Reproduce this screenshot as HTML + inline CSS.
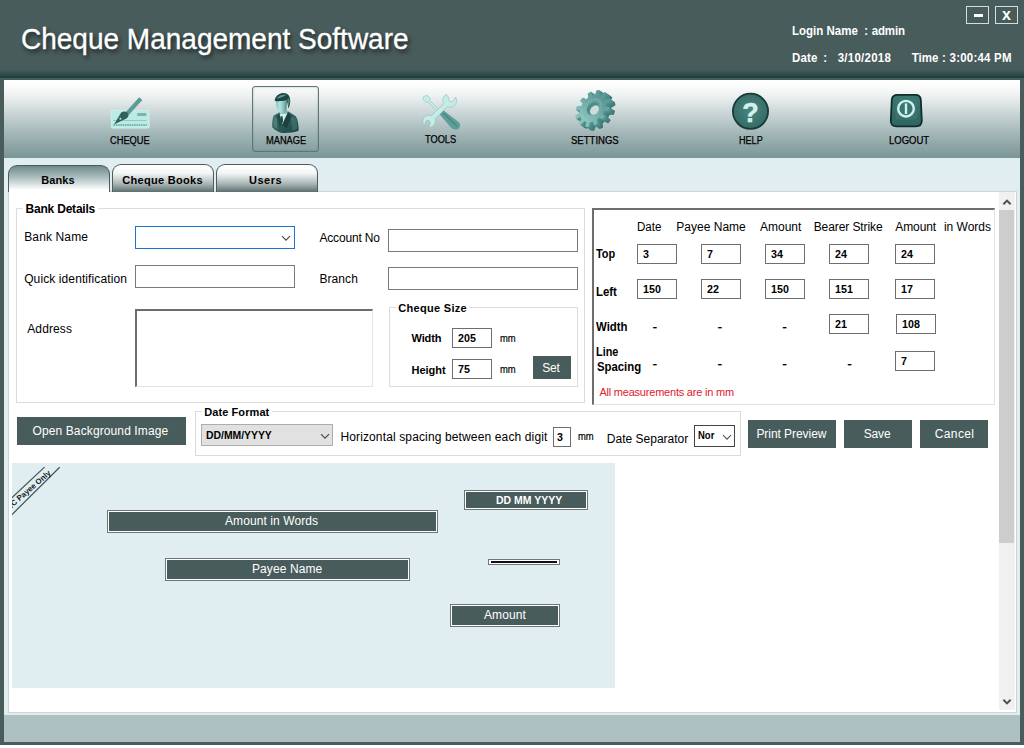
<!DOCTYPE html>
<html lang="en">
<head>
<meta charset="utf-8">
<title>Cheque Management Software</title>
<style>
*{box-sizing:border-box;margin:0;padding:0}
html,body{width:1024px;height:748px;overflow:hidden;background:#fff}
body{font-family:"Liberation Sans",sans-serif;font-size:12px;color:#000}
#app{position:relative;width:1024px;height:748px;overflow:hidden;background:#fff}
.abs,#app div,#app span,#app svg{position:absolute}
.t{white-space:nowrap;line-height:1}
.b{font-weight:bold}
/* frame */
#frame{left:0;top:0;width:1024px;height:745px;background:#485c5b}
#hdrgrad{left:0;top:70px;width:1024px;height:8px;background:linear-gradient(#485c5b,#163f3c)}
#inner{left:4px;top:80px;width:1016px;height:662px;background:#e0eef2}
#toolbar{left:4px;top:80px;width:1016px;height:78px;background:linear-gradient(#ffffff 0%,#fdfdfd 6%,#eef1f1 20%,#c3d0d1 47%,#9db2b3 73%,#7a9596 100%)}
#status{left:4px;top:715px;width:1016px;height:27px;background:#adc1c3}
#panel{left:8px;top:191px;width:1009px;height:522px;background:#fff;border:1px solid #d0d4d4}
/* header */
#title{left:21px;top:25px;font-size:28px;color:#fff;transform:scaleY(1.05);transform-origin:0 4px;-webkit-text-stroke:.3px #fff;text-shadow:2px 3px 4px rgba(0,0,0,.65)}
.hl{color:#fff;font-weight:bold;transform:scaleY(1.05);transform-origin:0 85%}
.wb{border:1px solid #d5dedd;color:#fff;font-weight:bold;text-align:center}
/* toolbar labels */
.tl{color:#000;-webkit-text-stroke:.25px #000}
/* tabs */
.tab{border:1px solid #4d5c5c;border-bottom:none;border-radius:9px 9px 0 0;font-weight:bold;font-size:11px;text-align:center}
/* form */
.in{background:#fff;border:1px solid #7a7a7a}
.sin{background:#fff;border:1px solid #6e6e6e;font-weight:bold;font-size:10.7px;padding:4px 0 0 5px;line-height:1}
.fs{border:1px solid #dcdcdc}
.lg{background:#fff;font-weight:bold;padding:0 2px}
.btn{background:#485c5b;color:#fff;text-align:center;font-size:12px}
.cbx{border:1px solid #6c7777;background:#fff}
.cbx i{position:absolute;left:1px;top:1px;right:1px;bottom:1px;background:#485c5b;display:block}
.cbx span{left:0;right:0;text-align:center;color:#fff;white-space:nowrap;line-height:1}
.dash{width:5px;height:1.4px;background:#222}
</style>
</head>
<body>
<div id="app">
<div id="frame"></div>
<div id="hdrgrad"></div>
<div id="inner"></div>
<div id="toolbar"></div>
<div id="status"></div>
<div id="panel"></div>

<!-- HEADER -->
<div id="title" class="t">Cheque Management Software</div>
<!--HDR-->
<div class="t hl" style="left:792.00px;top:25.87px;font-size:11.5px;font-weight:bold;letter-spacing:0.009px;">Login Name</div>
<div class="t hl" style="left:864.30px;top:25.87px;font-size:11.5px;font-weight:bold;">:</div>
<div class="t hl" style="left:871.70px;top:25.87px;font-size:11.5px;font-weight:bold;letter-spacing:-0.135px;">admin</div>
<div class="t hl" style="left:792.00px;top:53.27px;font-size:11.5px;font-weight:bold;letter-spacing:0.157px;">Date</div>
<div class="t hl" style="left:823.20px;top:53.27px;font-size:11.5px;font-weight:bold;">:</div>
<div class="t hl" style="left:837.70px;top:53.27px;font-size:11.5px;font-weight:bold;letter-spacing:0.254px;">3/10/2018</div>
<div class="t hl" style="left:911.80px;top:53.27px;font-size:11.5px;font-weight:bold;letter-spacing:-0.012px;">Time</div>
<div class="t hl" style="left:942.00px;top:53.27px;font-size:11.5px;font-weight:bold;">:</div>
<div class="t hl" style="left:949.60px;top:53.27px;font-size:11.5px;font-weight:bold;letter-spacing:0.200px;">3:00:44 PM</div>
<div class="wb" style="left:966px;top:6px;width:23px;height:18px"><div style="left:7px;top:7px;width:9px;height:3px;background:#fff"></div></div>
<div class="wb" style="left:995px;top:6px;width:23px;height:18px"><span class="t" style="left:0;right:0;top:0.3px;font-size:16px">x</span></div>
<!--/HDR-->

<!--TOOLBAR-->
<div style="left:252px;top:86px;width:67px;height:66px;border:1px solid #5f7677;border-radius:3px;box-shadow:inset 0 0 2px rgba(70,95,95,.45)"></div>
<svg style="left:0;top:80px" width="1024" height="78" viewBox="0 80 1024 78">
<defs>
<linearGradient id="gHead" x1="0" y1="0" x2="1" y2="0"><stop offset="0" stop-color="#86c2bb"/><stop offset=".35" stop-color="#b4e4de"/><stop offset=".7" stop-color="#86c2bb"/><stop offset="1" stop-color="#4b827d"/></linearGradient>
<linearGradient id="gSuit" x1="0" y1="0" x2="1" y2="1"><stop offset="0" stop-color="#41766f"/><stop offset=".5" stop-color="#2c5b57"/><stop offset="1" stop-color="#1d4441"/></linearGradient>
<radialGradient id="gHelp" cx=".5" cy=".45" r=".6"><stop offset="0" stop-color="#4b8682"/><stop offset="1" stop-color="#336762"/></radialGradient>
<linearGradient id="gGear" x1="0" y1="0" x2="1" y2="0"><stop offset="0" stop-color="#8fc6c1"/><stop offset=".55" stop-color="#6fa9a5"/><stop offset="1" stop-color="#5a9692"/></linearGradient>
<linearGradient id="gOut" x1="0" y1="0" x2="0" y2="1"><stop offset="0" stop-color="#3c7571"/><stop offset="1" stop-color="#2f6561"/></linearGradient>
</defs>
<g>
<rect x="111.3" y="110.3" width="37.8" height="17.8" rx="1.2" fill="#bdeae3" stroke="#d2f3ee" stroke-width=".8"/>
<rect x="137.3" y="113" width="9" height="3" fill="#7db4ae"/>
<path d="M113 120.5 H146.5" stroke="#8ecdc6" stroke-width="1"/>
<path d="M113.5 125 H147" stroke="#7ab5af" stroke-width="2.2" stroke-dasharray="1.6 .7"/>
<path d="M140.8 98.6 L124.4 116.6" stroke="#5b9b96" stroke-width="4.2"/>
<path d="M121.2 112.6 C123.5 110.6 127 111.4 128 113.4 C129 115.4 128 117.4 126.4 118.4 L114 124.4 Z" fill="#2f625f"/>
<circle cx="120.4" cy="118.8" r="1" fill="#bfe8e2"/>
</g>
<g>
<path d="M273.8 115.5 C272.5 118 272 123 272.2 127.2 C275 130 278 132 281.5 132.9 C287 133.4 294 132.6 298.6 130.8 C298.8 126 298 120 296 116.4 L288.5 111.6 L280 112 Z" fill="url(#gSuit)"/>
<path d="M274.5 117 C273.4 120 273.2 123.5 273.4 126.4 L277.5 129.5 L276.8 118.5 Z" fill="#5a948f" opacity=".55"/>
<path d="M290.5 116.5 L295.4 117.4 C296.8 120.5 297.4 124.5 297.4 128.6 L292.5 130.8 Z" fill="#4a837f" opacity=".5"/>
<path d="M279.6 113.2 L287.8 112.4 L282.2 124.2 Z" fill="#d2efeb"/>
<path d="M279.2 113 L281.6 124.8 L279.6 126.8 L276.8 116.6 Z" fill="#1f4744" opacity=".85"/>
<path d="M288 112.4 L282.6 124.8 L286.4 128.8 L291.6 116 Z" fill="#1a3e3b" opacity=".85"/>
<path d="M280.6 116.4 L282.6 116.2 L283 121.6 L282 123.8 L280.6 121.6 Z" fill="#214b48"/>
<path d="M280.6 108.5 L280.4 114 L287 113.4 L286.6 108 Z" fill="#79b5ae"/>
<path d="M276 100.6 C275.8 104.5 276.6 108.5 278.4 111 C279.6 112.8 281 113.9 282.1 113.8 C283.7 113.6 285.3 111.6 286.1 109.4 C286.9 107 287.1 103 286.7 99.8 Z" fill="url(#gHead)"/>
<path d="M274.8 100.9 C274.6 97.5 278 93.6 283 93.1 C287.5 92.8 290 96 290.2 100 C290.4 104 289.4 106.8 288.2 108.2 C288 105.5 287.6 102.4 286.4 100 C283 101.2 278 101.5 274.8 100.9 Z" fill="#1d4542"/>
<path d="M276.6 98.6 C278.6 95.6 282.6 94.1 286.2 95 C283.6 96.6 279.6 98.5 276.6 98.6 Z" fill="#5f9a95"/>
<path d="M287.2 99.6 C288.2 97.6 289.5 97.4 289.7 100.6 C289.7 103.4 289 105.6 288.4 106.8 C288.2 104.4 287.9 101.8 287.2 99.6 Z" fill="#5a938e" opacity=".85"/>
</g>
<g>
<path d="M423.5 96.8 L427 95.2 L430.3 98.5 L429.5 100.3 L441.5 112.5 L440 114 L427.8 101.8 L426 102.4 L423 99.2 Z" fill="#c6ece7" stroke="#8cc6c0" stroke-width=".7"/>
<path d="M440.4 110.6 L443.6 110.6 L458.6 122 C461.2 124.6 460.2 128.4 457 129.4 C454.8 130 452.6 129.2 451.2 127.8 L439.6 114.6 C439 113 439.4 111.4 440.4 110.6 Z" fill="#5f9d98"/>
<path d="M443.4 113.2 L457.2 126.2" stroke="#4a8783" stroke-width="1.4"/>
<path d="M446.3 94.3 C443.2 96.2 442 100.2 443.6 103.6 L431.5 115.7 C428.2 114.4 424.6 115.6 423.3 119 C422.4 121.4 422.8 123.8 424.3 125.6 L425.6 122 C426 120.6 427.4 120 428.8 120.6 C430.2 121.2 430.6 122.8 430 124.2 L428.8 127.6 C431.8 127.4 434.4 125.2 435.2 122.4 C435.6 121 435.5 119.8 435.2 118.8 L447.4 106.6 C450.6 107.8 454.2 106.8 455.8 103.6 C456.8 101.6 456.8 99.2 455.6 97 L453.6 100.6 C452.8 102 451.4 102.4 450 101.6 C448.6 100.8 448.2 99.4 448.9 98 Z" fill="#c6ece7" stroke="#8cc6c0" stroke-width=".7"/>
</g>
<g transform="translate(598.20,112.40) rotate(-50) scale(1,.72)"><path d="M14.80 -2.42 L20.39 -2.14 L20.39 2.14 L14.80 2.42 L14.03 5.30 L18.73 8.34 L16.58 12.05 L11.61 9.50 L9.50 11.61 L12.05 16.58 L8.34 18.73 L5.30 14.03 L2.42 14.80 L2.14 20.39 L-2.14 20.39 L-2.42 14.80 L-5.30 14.03 L-8.34 18.73 L-12.05 16.58 L-9.50 11.61 L-11.61 9.50 L-16.58 12.05 L-18.73 8.34 L-14.03 5.30 L-14.80 2.42 L-20.39 2.14 L-20.39 -2.14 L-14.80 -2.42 L-14.03 -5.30 L-18.73 -8.34 L-16.58 -12.05 L-11.61 -9.50 L-9.50 -11.61 L-12.05 -16.58 L-8.34 -18.73 L-5.30 -14.03 L-2.42 -14.80 L-2.14 -20.39 L2.14 -20.39 L2.42 -14.80 L5.30 -14.03 L8.34 -18.73 L12.05 -16.58 L9.50 -11.61 L11.61 -9.50 L16.58 -12.05 L18.73 -8.34 L14.03 -5.30 Z" fill="#3c7773"/><circle r="15.3" fill="#3c7773"/></g>
<g transform="translate(597.58,111.97) rotate(-50) scale(1,.72)"><path d="M14.80 -2.42 L20.39 -2.14 L20.39 2.14 L14.80 2.42 L14.03 5.30 L18.73 8.34 L16.58 12.05 L11.61 9.50 L9.50 11.61 L12.05 16.58 L8.34 18.73 L5.30 14.03 L2.42 14.80 L2.14 20.39 L-2.14 20.39 L-2.42 14.80 L-5.30 14.03 L-8.34 18.73 L-12.05 16.58 L-9.50 11.61 L-11.61 9.50 L-16.58 12.05 L-18.73 8.34 L-14.03 5.30 L-14.80 2.42 L-20.39 2.14 L-20.39 -2.14 L-14.80 -2.42 L-14.03 -5.30 L-18.73 -8.34 L-16.58 -12.05 L-11.61 -9.50 L-9.50 -11.61 L-12.05 -16.58 L-8.34 -18.73 L-5.30 -14.03 L-2.42 -14.80 L-2.14 -20.39 L2.14 -20.39 L2.42 -14.80 L5.30 -14.03 L8.34 -18.73 L12.05 -16.58 L9.50 -11.61 L11.61 -9.50 L16.58 -12.05 L18.73 -8.34 L14.03 -5.30 Z" fill="#3f7b77"/><circle r="15.3" fill="#3f7b77"/></g>
<g transform="translate(596.96,111.53) rotate(-50) scale(1,.72)"><path d="M14.80 -2.42 L20.39 -2.14 L20.39 2.14 L14.80 2.42 L14.03 5.30 L18.73 8.34 L16.58 12.05 L11.61 9.50 L9.50 11.61 L12.05 16.58 L8.34 18.73 L5.30 14.03 L2.42 14.80 L2.14 20.39 L-2.14 20.39 L-2.42 14.80 L-5.30 14.03 L-8.34 18.73 L-12.05 16.58 L-9.50 11.61 L-11.61 9.50 L-16.58 12.05 L-18.73 8.34 L-14.03 5.30 L-14.80 2.42 L-20.39 2.14 L-20.39 -2.14 L-14.80 -2.42 L-14.03 -5.30 L-18.73 -8.34 L-16.58 -12.05 L-11.61 -9.50 L-9.50 -11.61 L-12.05 -16.58 L-8.34 -18.73 L-5.30 -14.03 L-2.42 -14.80 L-2.14 -20.39 L2.14 -20.39 L2.42 -14.80 L5.30 -14.03 L8.34 -18.73 L12.05 -16.58 L9.50 -11.61 L11.61 -9.50 L16.58 -12.05 L18.73 -8.34 L14.03 -5.30 Z" fill="#427f7b"/><circle r="15.3" fill="#427f7b"/></g>
<g transform="translate(596.33,111.10) rotate(-50) scale(1,.72)"><path d="M14.80 -2.42 L20.39 -2.14 L20.39 2.14 L14.80 2.42 L14.03 5.30 L18.73 8.34 L16.58 12.05 L11.61 9.50 L9.50 11.61 L12.05 16.58 L8.34 18.73 L5.30 14.03 L2.42 14.80 L2.14 20.39 L-2.14 20.39 L-2.42 14.80 L-5.30 14.03 L-8.34 18.73 L-12.05 16.58 L-9.50 11.61 L-11.61 9.50 L-16.58 12.05 L-18.73 8.34 L-14.03 5.30 L-14.80 2.42 L-20.39 2.14 L-20.39 -2.14 L-14.80 -2.42 L-14.03 -5.30 L-18.73 -8.34 L-16.58 -12.05 L-11.61 -9.50 L-9.50 -11.61 L-12.05 -16.58 L-8.34 -18.73 L-5.30 -14.03 L-2.42 -14.80 L-2.14 -20.39 L2.14 -20.39 L2.42 -14.80 L5.30 -14.03 L8.34 -18.73 L12.05 -16.58 L9.50 -11.61 L11.61 -9.50 L16.58 -12.05 L18.73 -8.34 L14.03 -5.30 Z" fill="#45837f"/><circle r="15.3" fill="#45837f"/></g>
<g transform="translate(595.71,110.67) rotate(-50) scale(1,.72)"><path d="M14.80 -2.42 L20.39 -2.14 L20.39 2.14 L14.80 2.42 L14.03 5.30 L18.73 8.34 L16.58 12.05 L11.61 9.50 L9.50 11.61 L12.05 16.58 L8.34 18.73 L5.30 14.03 L2.42 14.80 L2.14 20.39 L-2.14 20.39 L-2.42 14.80 L-5.30 14.03 L-8.34 18.73 L-12.05 16.58 L-9.50 11.61 L-11.61 9.50 L-16.58 12.05 L-18.73 8.34 L-14.03 5.30 L-14.80 2.42 L-20.39 2.14 L-20.39 -2.14 L-14.80 -2.42 L-14.03 -5.30 L-18.73 -8.34 L-16.58 -12.05 L-11.61 -9.50 L-9.50 -11.61 L-12.05 -16.58 L-8.34 -18.73 L-5.30 -14.03 L-2.42 -14.80 L-2.14 -20.39 L2.14 -20.39 L2.42 -14.80 L5.30 -14.03 L8.34 -18.73 L12.05 -16.58 L9.50 -11.61 L11.61 -9.50 L16.58 -12.05 L18.73 -8.34 L14.03 -5.30 Z" fill="#488783"/><circle r="15.3" fill="#488783"/></g>
<g transform="translate(595.09,110.23) rotate(-50) scale(1,.72)"><path d="M14.80 -2.42 L20.39 -2.14 L20.39 2.14 L14.80 2.42 L14.03 5.30 L18.73 8.34 L16.58 12.05 L11.61 9.50 L9.50 11.61 L12.05 16.58 L8.34 18.73 L5.30 14.03 L2.42 14.80 L2.14 20.39 L-2.14 20.39 L-2.42 14.80 L-5.30 14.03 L-8.34 18.73 L-12.05 16.58 L-9.50 11.61 L-11.61 9.50 L-16.58 12.05 L-18.73 8.34 L-14.03 5.30 L-14.80 2.42 L-20.39 2.14 L-20.39 -2.14 L-14.80 -2.42 L-14.03 -5.30 L-18.73 -8.34 L-16.58 -12.05 L-11.61 -9.50 L-9.50 -11.61 L-12.05 -16.58 L-8.34 -18.73 L-5.30 -14.03 L-2.42 -14.80 L-2.14 -20.39 L2.14 -20.39 L2.42 -14.80 L5.30 -14.03 L8.34 -18.73 L12.05 -16.58 L9.50 -11.61 L11.61 -9.50 L16.58 -12.05 L18.73 -8.34 L14.03 -5.30 Z" fill="#4b8b87"/><circle r="15.3" fill="#4b8b87"/></g>
<g transform="translate(594.47,109.80) rotate(-50) scale(1,.72)"><path d="M14.80 -2.42 L20.39 -2.14 L20.39 2.14 L14.80 2.42 L14.03 5.30 L18.73 8.34 L16.58 12.05 L11.61 9.50 L9.50 11.61 L12.05 16.58 L8.34 18.73 L5.30 14.03 L2.42 14.80 L2.14 20.39 L-2.14 20.39 L-2.42 14.80 L-5.30 14.03 L-8.34 18.73 L-12.05 16.58 L-9.50 11.61 L-11.61 9.50 L-16.58 12.05 L-18.73 8.34 L-14.03 5.30 L-14.80 2.42 L-20.39 2.14 L-20.39 -2.14 L-14.80 -2.42 L-14.03 -5.30 L-18.73 -8.34 L-16.58 -12.05 L-11.61 -9.50 L-9.50 -11.61 L-12.05 -16.58 L-8.34 -18.73 L-5.30 -14.03 L-2.42 -14.80 L-2.14 -20.39 L2.14 -20.39 L2.42 -14.80 L5.30 -14.03 L8.34 -18.73 L12.05 -16.58 L9.50 -11.61 L11.61 -9.50 L16.58 -12.05 L18.73 -8.34 L14.03 -5.30 Z" fill="#4e8f8b"/><circle r="15.3" fill="#4e8f8b"/></g>
<g transform="translate(593.84,109.37) rotate(-50) scale(1,.72)"><path d="M14.80 -2.42 L20.39 -2.14 L20.39 2.14 L14.80 2.42 L14.03 5.30 L18.73 8.34 L16.58 12.05 L11.61 9.50 L9.50 11.61 L12.05 16.58 L8.34 18.73 L5.30 14.03 L2.42 14.80 L2.14 20.39 L-2.14 20.39 L-2.42 14.80 L-5.30 14.03 L-8.34 18.73 L-12.05 16.58 L-9.50 11.61 L-11.61 9.50 L-16.58 12.05 L-18.73 8.34 L-14.03 5.30 L-14.80 2.42 L-20.39 2.14 L-20.39 -2.14 L-14.80 -2.42 L-14.03 -5.30 L-18.73 -8.34 L-16.58 -12.05 L-11.61 -9.50 L-9.50 -11.61 L-12.05 -16.58 L-8.34 -18.73 L-5.30 -14.03 L-2.42 -14.80 L-2.14 -20.39 L2.14 -20.39 L2.42 -14.80 L5.30 -14.03 L8.34 -18.73 L12.05 -16.58 L9.50 -11.61 L11.61 -9.50 L16.58 -12.05 L18.73 -8.34 L14.03 -5.30 Z" fill="#51928e"/><circle r="15.3" fill="#51928e"/></g>
<g transform="translate(593.22,108.93) rotate(-50) scale(1,.72)"><path d="M14.80 -2.42 L20.39 -2.14 L20.39 2.14 L14.80 2.42 L14.03 5.30 L18.73 8.34 L16.58 12.05 L11.61 9.50 L9.50 11.61 L12.05 16.58 L8.34 18.73 L5.30 14.03 L2.42 14.80 L2.14 20.39 L-2.14 20.39 L-2.42 14.80 L-5.30 14.03 L-8.34 18.73 L-12.05 16.58 L-9.50 11.61 L-11.61 9.50 L-16.58 12.05 L-18.73 8.34 L-14.03 5.30 L-14.80 2.42 L-20.39 2.14 L-20.39 -2.14 L-14.80 -2.42 L-14.03 -5.30 L-18.73 -8.34 L-16.58 -12.05 L-11.61 -9.50 L-9.50 -11.61 L-12.05 -16.58 L-8.34 -18.73 L-5.30 -14.03 L-2.42 -14.80 L-2.14 -20.39 L2.14 -20.39 L2.42 -14.80 L5.30 -14.03 L8.34 -18.73 L12.05 -16.58 L9.50 -11.61 L11.61 -9.50 L16.58 -12.05 L18.73 -8.34 L14.03 -5.30 Z" fill="#549591"/><circle r="15.3" fill="#549591"/></g>
<g transform="translate(592.6,108.5) rotate(-50) scale(1,.72)">
<path d="M14.80 -2.42 L20.39 -2.14 L20.39 2.14 L14.80 2.42 L14.03 5.30 L18.73 8.34 L16.58 12.05 L11.61 9.50 L9.50 11.61 L12.05 16.58 L8.34 18.73 L5.30 14.03 L2.42 14.80 L2.14 20.39 L-2.14 20.39 L-2.42 14.80 L-5.30 14.03 L-8.34 18.73 L-12.05 16.58 L-9.50 11.61 L-11.61 9.50 L-16.58 12.05 L-18.73 8.34 L-14.03 5.30 L-14.80 2.42 L-20.39 2.14 L-20.39 -2.14 L-14.80 -2.42 L-14.03 -5.30 L-18.73 -8.34 L-16.58 -12.05 L-11.61 -9.50 L-9.50 -11.61 L-12.05 -16.58 L-8.34 -18.73 L-5.30 -14.03 L-2.42 -14.80 L-2.14 -20.39 L2.14 -20.39 L2.42 -14.80 L5.30 -14.03 L8.34 -18.73 L12.05 -16.58 L9.50 -11.61 L11.61 -9.50 L16.58 -12.05 L18.73 -8.34 L14.03 -5.30 Z" fill="url(#gGear)"/><circle r="15.3" fill="url(#gGear)"/>
<circle r="10.4" fill="none" stroke="#7fbab5" stroke-width="1.6" opacity=".55"/>
<circle r="6.9" fill="#4d8c88"/>
</g>
<g transform="translate(594.5,110.0) rotate(-50) scale(1,.72)"><circle r="5.3" fill="#cfdcdc"/></g>
<g>
<circle cx="750.5" cy="111.3" r="17.6" fill="url(#gHelp)" stroke="#173b38" stroke-width="1.8"/>
<text x="750.6" y="121.6" text-anchor="middle" font-family="Liberation Sans, sans-serif" font-weight="bold" font-size="27" fill="#d5f1ed" stroke="#d5f1ed" stroke-width=".5" stroke-linejoin="round">?</text>
</g>
<g>
<path d="M897.5 94.8 H915.5 Q920.3 94.8 920.8 99.5 L921.8 120.5 Q921.8 126.3 916 126.3 H896.5 Q890.6 126.3 890.8 120.5 L891.8 99.5 Q892.3 94.8 897.5 94.8 Z" fill="url(#gOut)" stroke="#0f2f2c" stroke-width="1.8"/>
<rect x="895.5" y="98.5" width="21.5" height="21" rx="3" fill="#3f7a76" opacity=".55"/>
<circle cx="906" cy="108.7" r="7.8" fill="none" stroke="#cdf3ee" stroke-width="2.4"/>
<path d="M906 103.4 V114" stroke="#cdf3ee" stroke-width="2.4"/>
</g>
</svg>
<div class="t tl" style="left:110.00px;top:135.53px;font-size:10.0px;transform:scale(0.928,1.000);transform-origin:0 84.65%;">CHEQUE</div>
<div class="t tl" style="left:265.90px;top:135.53px;font-size:10.0px;transform:scale(0.927,1.000);transform-origin:0 84.65%;">MANAGE</div>
<div class="t tl" style="left:424.60px;top:134.53px;font-size:10.0px;transform:scale(0.922,1.000);transform-origin:0 84.65%;">TOOLS</div>
<div class="t tl" style="left:571.00px;top:135.53px;font-size:10.0px;transform:scale(0.954,1.000);transform-origin:0 84.65%;">SETTINGS</div>
<div class="t tl" style="left:738.60px;top:135.53px;font-size:10.0px;transform:scale(0.907,1.000);transform-origin:0 84.65%;">HELP</div>
<div class="t tl" style="left:888.50px;top:135.53px;font-size:10.0px;transform:scale(0.950,1.000);transform-origin:0 84.65%;">LOGOUT</div>
<!--/TOOLBAR-->

<!--TABS-->
<div class="tab" style="left:8px;top:165px;width:102px;height:27px;background:linear-gradient(#6f8a8b 0%,#a9bcbd 42%,#ffffff 92%)"><div class="t " style="left:32.20px;top:8.69px;font-size:11px;font-weight:bold;letter-spacing:0.075px;">Banks</div>
</div>
<div class="tab" style="left:112px;top:164px;width:102px;height:28px;background:linear-gradient(#ffffff 0%,#f4f6f6 30%,#a9b4b4 70%,#5c6e6e 100%)"><div class="t " style="left:9.20px;top:9.69px;font-size:11px;font-weight:bold;letter-spacing:0.310px;">Cheque Books</div>
</div>
<div class="tab" style="left:216px;top:164px;width:102px;height:28px;background:linear-gradient(#ffffff 0%,#f4f6f6 30%,#a9b4b4 70%,#5c6e6e 100%)"><div class="t " style="left:32.00px;top:9.69px;font-size:11px;font-weight:bold;letter-spacing:0.510px;">Users</div>
</div>
<!--/TABS-->

<!--FORM-->
<div class="fs" style="left:16px;top:208px;width:569px;height:195px"></div>
<div style="left:23px;top:206px;width:75px;height:5px;background:#fff"></div>
<div class="t " style="left:25.60px;top:202.84px;font-size:12px;font-weight:bold;letter-spacing:-0.214px;">Bank Details</div>
<div class="t " style="left:24.20px;top:230.84px;font-size:12px;letter-spacing:0.135px;">Bank Name</div>
<div class="in" style="left:135px;top:226px;width:160px;height:23px;border-color:#1874cd"><svg style="left:145px;top:8px" width="10" height="7" viewBox="0 0 10 7"><path d="M1 1.2 L5 5.2 L9 1.2" fill="none" stroke="#444" stroke-width="1.1"/></svg></div>
<div class="t " style="left:24.20px;top:272.84px;font-size:12px;letter-spacing:0.103px;">Quick identification</div>
<div class="in" style="left:135px;top:265px;width:160px;height:23px"></div>
<div class="t " style="left:319.40px;top:231.84px;font-size:12px;letter-spacing:-0.173px;">Account No</div>
<div class="in" style="left:388px;top:229px;width:190px;height:23px"></div>
<div class="t " style="left:319.40px;top:272.84px;font-size:12px;letter-spacing:0.090px;">Branch</div>
<div class="in" style="left:388px;top:267px;width:190px;height:23px"></div>
<div class="t " style="left:27.20px;top:322.84px;font-size:12px;letter-spacing:0.130px;">Address</div>
<div style="left:135px;top:309px;width:238px;height:78px;background:#fff;border-left:2px solid #6d6d6d;border-top:2px solid #6d6d6d;border-right:1px solid #e3e3e3;border-bottom:1px solid #e3e3e3"></div>
<div class="fs" style="left:389px;top:307px;width:189px;height:80px"></div>
<div style="left:396px;top:305px;width:73px;height:5px;background:#fff"></div>
<div class="t " style="left:398.30px;top:302.89px;font-size:11px;font-weight:bold;letter-spacing:0.301px;">Cheque Size</div>
<div class="t " style="left:411.60px;top:332.69px;font-size:11px;font-weight:bold;letter-spacing:-0.156px;">Width</div>
<div class="sin" style="left:452px;top:328px;width:40px;height:20px">205</div>
<div class="t " style="left:499.70px;top:333.39px;font-size:11px;transform:scale(0.859,1.000);transform-origin:0 84.65%;-webkit-text-stroke:.2px #000;">mm</div>
<div class="t " style="left:411.60px;top:364.69px;font-size:11px;font-weight:bold;letter-spacing:-0.031px;">Height</div>
<div class="sin" style="left:452px;top:359px;width:40px;height:20px">75</div>
<div class="t " style="left:499.70px;top:363.69px;font-size:11px;transform:scale(0.859,1.000);transform-origin:0 84.65%;-webkit-text-stroke:.2px #000;">mm</div>
<div class="btn" style="left:533px;top:356px;width:38px;height:23px"></div>
<div class="t " style="left:542.20px;top:361.84px;font-size:12px;color:#fff;letter-spacing:-0.189px;">Set</div>
<!--/FORM-->

<!--RIGHT-->
<div style="left:592px;top:208px;width:403px;height:197px;background:#fff;border-left:2px solid #6d6d6d;border-top:2px solid #6d6d6d;border-right:1px solid #e3e3e3;border-bottom:1px solid #e3e3e3"></div>
<div class="t " style="left:636.60px;top:220.84px;font-size:12px;transform:scale(0.962,1.000);transform-origin:0 84.65%;">Date</div>
<div class="t " style="left:676.30px;top:220.84px;font-size:12px;letter-spacing:0.012px;">Payee Name</div>
<div class="t " style="left:760.00px;top:220.84px;font-size:12px;">Amount</div>
<div class="t " style="left:813.70px;top:220.84px;font-size:12px;letter-spacing:-0.088px;">Bearer Strike</div>
<div class="t " style="left:895.30px;top:220.84px;font-size:12px;letter-spacing:-0.104px;">Amount</div>
<div class="t " style="left:943.90px;top:220.84px;font-size:12px;">in Words</div>
<div class="t " style="left:596.20px;top:247.84px;font-size:12px;font-weight:bold;transform:scale(0.910,1.000);transform-origin:0 84.65%;">Top</div>
<div class="t " style="left:596.20px;top:285.84px;font-size:12px;font-weight:bold;transform:scale(0.950,1.000);transform-origin:0 84.65%;">Left</div>
<div class="t " style="left:596.20px;top:320.84px;font-size:12px;font-weight:bold;transform:scale(0.949,1.000);transform-origin:0 84.65%;">Width</div>
<div class="t " style="left:596.20px;top:345.84px;font-size:12px;font-weight:bold;transform:scale(0.904,1.000);transform-origin:0 84.65%;">Line</div>
<div class="t " style="left:597.00px;top:360.84px;font-size:12px;font-weight:bold;transform:scale(0.945,1.000);transform-origin:0 84.65%;">Spacing</div>
<div class="sin" style="left:637px;top:244px;width:40px;height:20px">3</div>
<div class="sin" style="left:701px;top:244px;width:40px;height:20px">7</div>
<div class="sin" style="left:765px;top:244px;width:40px;height:20px">34</div>
<div class="sin" style="left:829px;top:244px;width:40px;height:20px">24</div>
<div class="sin" style="left:895px;top:244px;width:40px;height:20px">24</div>
<div class="sin" style="left:637px;top:279px;width:40px;height:20px">150</div>
<div class="sin" style="left:701px;top:279px;width:40px;height:20px">22</div>
<div class="sin" style="left:765px;top:279px;width:40px;height:20px">150</div>
<div class="sin" style="left:829px;top:279px;width:40px;height:20px">151</div>
<div class="sin" style="left:895px;top:279px;width:40px;height:20px">17</div>
<div class="sin" style="left:829px;top:314px;width:40px;height:20px">21</div>
<div class="sin" style="left:896px;top:314px;width:40px;height:20px">108</div>
<div class="sin" style="left:895px;top:351px;width:40px;height:20px">7</div>
<div class="t " style="left:652.60px;top:319.55px;font-size:14px;-webkit-text-stroke:.2px #000;">-</div>
<div class="t " style="left:717.60px;top:319.55px;font-size:14px;-webkit-text-stroke:.2px #000;">-</div>
<div class="t " style="left:782.20px;top:319.55px;font-size:14px;-webkit-text-stroke:.2px #000;">-</div>
<div class="t " style="left:652.60px;top:356.75px;font-size:14px;-webkit-text-stroke:.2px #000;">-</div>
<div class="t " style="left:717.60px;top:356.75px;font-size:14px;-webkit-text-stroke:.2px #000;">-</div>
<div class="t " style="left:782.20px;top:356.75px;font-size:14px;-webkit-text-stroke:.2px #000;">-</div>
<div class="t " style="left:847.20px;top:356.75px;font-size:14px;-webkit-text-stroke:.2px #000;">-</div>
<div class="t " style="left:599.40px;top:387.09px;font-size:11px;color:#e0202e;letter-spacing:-0.213px;">All measurements are in mm</div>
<!--/RIGHT-->

<!--ACTIONS-->
<div class="btn" style="left:17px;top:417px;width:169px;height:28px"></div>
<div class="t " style="left:32.50px;top:425.34px;font-size:12px;color:#fff;letter-spacing:0.113px;">Open Background Image</div>
<div class="fs" style="left:195px;top:411px;width:546px;height:45px"></div>
<div style="left:202px;top:409px;width:70px;height:5px;background:#fff"></div>
<div class="t " style="left:204.20px;top:406.89px;font-size:11px;font-weight:bold;letter-spacing:0.088px;">Date Format</div>
<div style="left:201px;top:424px;width:132px;height:22px;background:#e1e1e1;border:1px solid #adadad"><svg style="left:118px;top:8px" width="10" height="7" viewBox="0 0 10 7"><path d="M1 1.2 L5 5.2 L9 1.2" fill="none" stroke="#444" stroke-width="1.1"/></svg></div>
<div class="t " style="left:205.60px;top:429.69px;font-size:11px;font-weight:bold;transform:scale(0.944,1.000);transform-origin:0 84.65%;">DD/MM/YYYY</div>
<div class="t " style="left:340.40px;top:430.84px;font-size:12px;letter-spacing:0.134px;">Horizontal spacing between each digit</div>
<div class="sin" style="left:553px;top:427px;width:18px;height:20px;padding-left:3px">3</div>
<div class="t " style="left:577.60px;top:431.19px;font-size:11px;transform:scale(0.859,1.000);transform-origin:0 84.65%;-webkit-text-stroke:.2px #000;">mm</div>
<div class="t " style="left:606.80px;top:432.84px;font-size:12px;letter-spacing:0.009px;">Date Separator</div>
<div style="left:694px;top:425px;width:41px;height:22px;background:#fff;border:1px solid #444"><svg style="left:27px;top:8px" width="10" height="7" viewBox="0 0 10 7"><path d="M1 1.2 L5 5.2 L9 1.2" fill="none" stroke="#555" stroke-width="1.1"/></svg></div>
<div class="t " style="left:698.00px;top:429.69px;font-size:11px;font-weight:bold;transform:scale(0.865,1.000);transform-origin:0 84.65%;">Nor</div>
<div class="btn" style="left:748px;top:420px;width:88px;height:28px"></div>
<div class="t " style="left:756.40px;top:427.84px;font-size:12px;color:#fff;letter-spacing:-0.052px;">Print Preview</div>
<div class="btn" style="left:844px;top:420px;width:68px;height:28px"></div>
<div class="t " style="left:863.70px;top:427.84px;font-size:12px;color:#fff;letter-spacing:-0.126px;">Save</div>
<div class="btn" style="left:920px;top:420px;width:68px;height:28px"></div>
<div class="t " style="left:934.80px;top:427.84px;font-size:12px;color:#fff;letter-spacing:0.362px;">Cancel</div>
<!--/ACTIONS-->

<!--CHEQUE-->
<div style="left:12px;top:463px;width:603px;height:225px;background:#e0eef2;overflow:hidden"><svg style="left:0;top:0" width="70" height="60" viewBox="0 0 70 60"><path d="M-1 35.6 L32.5 4.1 M-1 52.5 L47.7 4.2" stroke="#475757" stroke-width="1.25" fill="none"/><text x="0" y="0" transform="translate(-4.3,48.6) rotate(-41)" font-family="Liberation Sans, sans-serif" font-size="7.8" font-weight="bold" fill="#151515">A/C Payee Only</text></svg></div>
<div class="cbx" style="left:107px;top:510px;width:331px;height:23px"><i></i><div class="t " style="left:117.00px;top:3.84px;font-size:12px;color:#fff;letter-spacing:0.085px;">Amount in Words</div>
</div>
<div class="cbx" style="left:165px;top:558px;width:245px;height:23px"><i></i><div class="t " style="left:86.00px;top:3.84px;font-size:12px;color:#fff;letter-spacing:0.089px;">Payee Name</div>
</div>
<div class="cbx" style="left:464px;top:490px;width:124px;height:20px"><i></i><div class="t " style="left:30.50px;top:3.69px;font-size:11px;font-weight:bold;color:#fff;transform:scale(0.953,1.000);transform-origin:0 84.65%;">DD MM YYYY</div>
</div>
<div class="cbx" style="left:488px;top:559px;width:72px;height:6px"><i style="background:#111;top:1px;bottom:1px;left:2px;right:2px"></i></div>
<div class="cbx" style="left:450px;top:604px;width:110px;height:23px"><i></i><div class="t " style="left:33.00px;top:3.84px;font-size:12px;color:#fff;letter-spacing:0.116px;">Amount</div>
</div>
<!--/CHEQUE-->

<!--SCROLL-->
<div style="left:999px;top:192px;width:16px;height:518px;background:#f0f0f0"></div>
<div style="left:999px;top:210px;width:15px;height:333px;background:#cdcdcd"></div>
<svg style="left:1002px;top:198px" width="10" height="8" viewBox="0 0 10 8"><path d="M1.4 6.3 L5 2.6 L8.6 6.3" fill="none" stroke="#505050" stroke-width="2"/></svg>
<svg style="left:1002px;top:698px" width="10" height="8" viewBox="0 0 10 8"><path d="M1.4 1.7 L5 5.4 L8.6 1.7" fill="none" stroke="#505050" stroke-width="2"/></svg>
<!--/SCROLL-->
</div>
</body>
</html>
